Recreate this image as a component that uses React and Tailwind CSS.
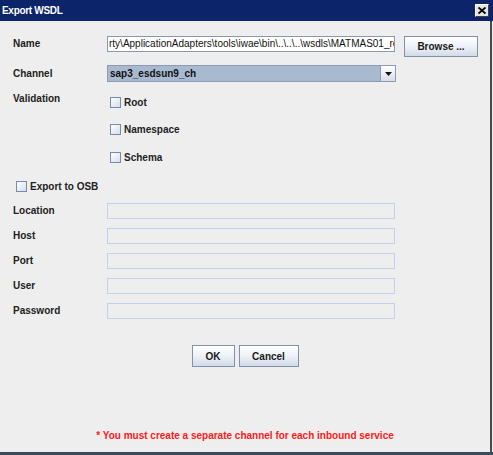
import React from "react";

const font = { fontFamily: '"Liberation Sans", Arial, sans-serif' };

function CheckBox() {
  return (
    <span className="inline-block w-[11px] h-[11px] border border-[#7a8aa6] bg-gradient-to-br from-white to-[#d4dded] shrink-0" />
  );
}

function CheckRow({ label, className = "" }) {
  return (
    <div className={"flex items-center gap-[3px] " + className}>
      <CheckBox />
      <span className="text-[10px] font-bold text-[#222] leading-none">{label}</span>
    </div>
  );
}

function Button({ children, className = "" }) {
  return (
    <div
      className={
        "flex items-center justify-center border border-[#8190ab] bg-gradient-to-b from-white via-[#eef1f7] to-[#d3dbe9] text-[10px] font-bold text-[#1a1a1a] " +
        className
      }
    >
      {children}
    </div>
  );
}

function FieldRow({ label }) {
  return (
    <div className="flex items-center h-[16px] mb-[9px]">
      <span className="w-[94px] text-[10px] font-bold text-[#222] leading-none">{label}</span>
      <div className="w-[288px] h-[16px] border border-[#c3d0ee] bg-[#eeeeee]" />
    </div>
  );
}

export default function App() {
  return (
    <div className="w-[493px] h-[455px] flex flex-col bg-white" style={font}>
      {/* title bar */}
      <div className="h-[21px] bg-[#0c246a] flex items-center justify-between pl-[2px] pr-[4px]">
        <span className="text-white text-[10px] font-bold tracking-[-0.3px]">Export WSDL</span>
        <div className="w-[14px] h-[13px] bg-[#e4e4e4] border border-t-white border-l-white border-r-[#404040] border-b-[#404040] flex items-center justify-center">
          <svg width="8" height="7" viewBox="0 0 8 7">
            <path d="M0.5 0.5 L7.5 6.5 M7.5 0.5 L0.5 6.5" stroke="#000" strokeWidth="1.8" />
          </svg>
        </div>
      </div>

      {/* dialog body */}
      <div className="flex-1 flex">
        <div className="flex-1 bg-[#eeeeee] pl-[13px] pt-[15px] flex flex-col">
          {/* Name */}
          <div className="flex items-start h-[21px]">
            <span className="w-[94px] mt-[3px] text-[10px] font-bold text-[#222] leading-[10px]">Name</span>
            <div className="w-[288px] h-[16px] border border-[#8a98b2] bg-white overflow-hidden whitespace-nowrap text-[10px] leading-[14px] text-[#111] pl-[1px]">
              rty\ApplicationAdapters\tools\iwae\bin\..\..\..\wsdls\MATMAS01_re
            </div>
            <Button className="ml-[9px] w-[74px] h-[21px]">Browse ...</Button>
          </div>

          {/* Channel */}
          <div className="flex items-center mt-[8px] h-[17px]">
            <span className="w-[94px] text-[10px] font-bold text-[#222] leading-none">Channel</span>
            <div className="w-[289px] h-[17px] flex border border-[#8c9ab3] bg-[#a9b9d0]">
              <span className="flex-1 text-[10px] font-bold text-[#111] leading-[15px] pl-[2px]">sap3_esdsun9_ch</span>
              <div className="w-[15px] h-full border-l border-[#8c9ab3] bg-gradient-to-b from-white to-[#d6dde9] flex items-center justify-center">
                <svg width="7" height="4" viewBox="0 0 7 4">
                  <path d="M0 0 H7 L3.5 4 Z" fill="#111" />
                </svg>
              </div>
            </div>
          </div>

          {/* Validation */}
          <div className="flex items-start mt-[15px]">
            <span className="w-[94px] mt-[-3px] text-[10px] font-bold text-[#222] leading-none">Validation</span>
            <div className="flex flex-col ml-[3px]">
              <CheckRow label="Root" className="h-[11px]" />
              <CheckRow label="Namespace" className="h-[11px] mt-[16px]" />
              <CheckRow label="Schema" className="h-[11px] mt-[17px]" />
            </div>
          </div>

          {/* Export to OSB */}
          <CheckRow label="Export to OSB" className="h-[11px] mt-[18px] ml-[3px]" />

          {/* OSB connection fields */}
          <div className="flex flex-col mt-[11px]">
            <FieldRow label="Location" />
            <FieldRow label="Host" />
            <FieldRow label="Port" />
            <FieldRow label="User" />
            <FieldRow label="Password" />
          </div>

          {/* action buttons */}
          <div className="flex justify-center gap-[4px] mt-[17px] ml-[-13px]">
            <Button className="w-[43px] h-[22px]">OK</Button>
            <Button className="w-[60px] h-[22px]">Cancel</Button>
          </div>

          {/* note */}
          <div className="mt-auto mb-[9px] text-center text-[10px] font-bold text-[#ff1a1a] ml-[-13px]">
            * You must create a separate channel for each inbound service
          </div>
        </div>
        <div className="w-[2px] bg-[#4a4a4a]" />
        <div className="w-[1px] bg-[#eeeeee]" />
      </div>
      <div className="h-[3px] bg-[#3b4b5e]" />
    </div>
  );
}
